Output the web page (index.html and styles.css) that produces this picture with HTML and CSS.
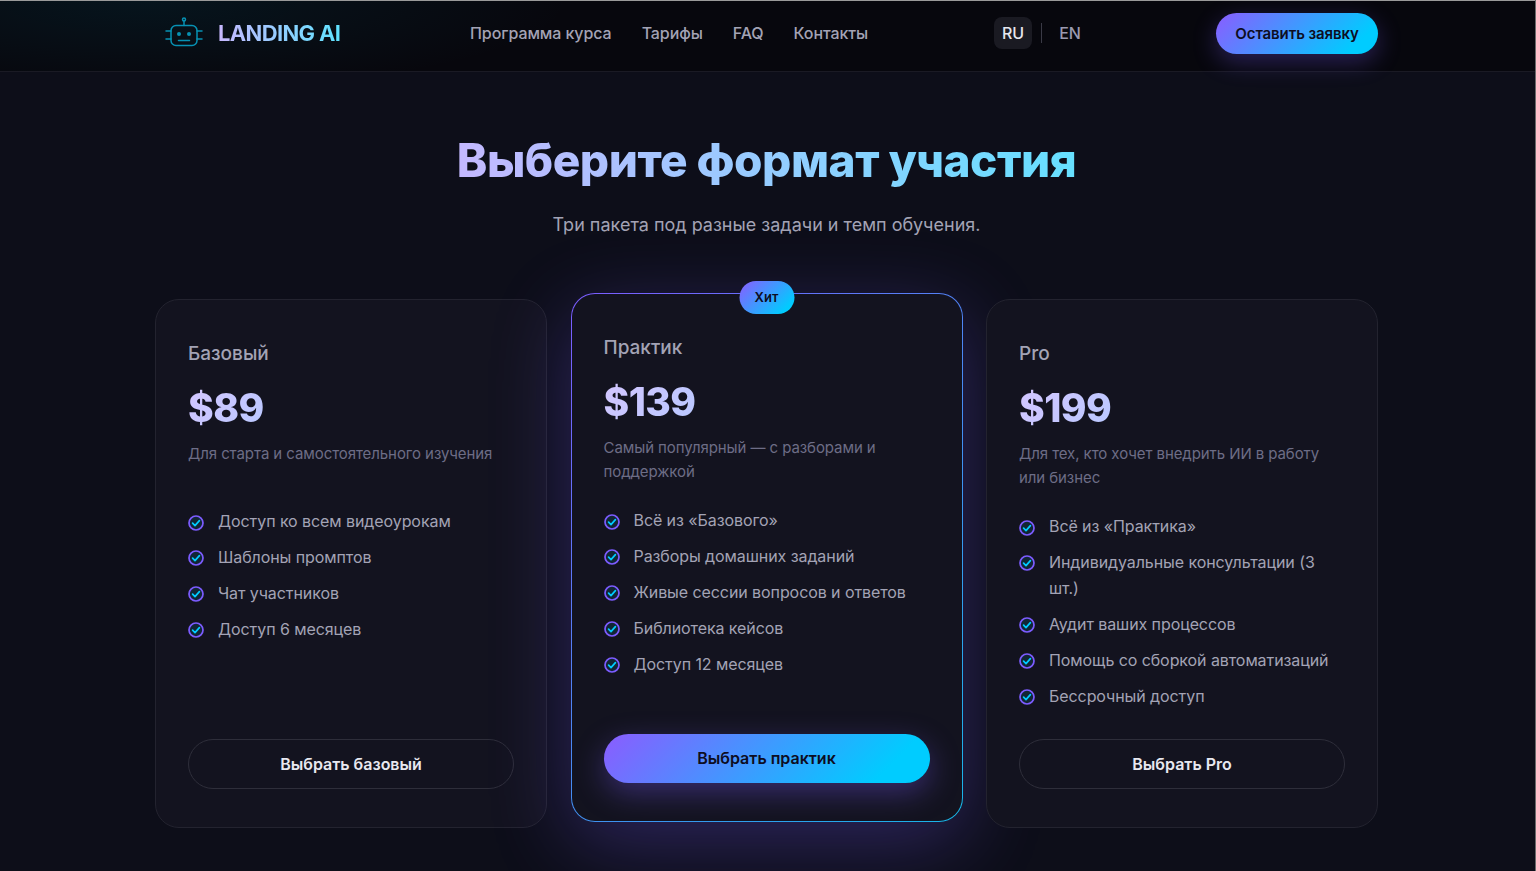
FILE: index.html
```html
<!DOCTYPE html>
<html lang="ru">
<head>
  <meta charset="UTF-8">
  <meta name="viewport" content="width=device-width, initial-scale=1.0">
  <title>Landing AI</title>
  <link rel="stylesheet" href="styles.css">
</head>
<body>

  <!-- Header -->
  <header class="site-header">
    <div class="header-inner">
      <a class="logo" href="#">
        <svg class="logo-icon" viewBox="0 0 38 30" width="38" height="30" fill="none" stroke="#0791b3" stroke-width="1.5" stroke-linecap="round">
          <circle cx="19" cy="2.5" r="1.5"/>
          <path d="M19 4v4.5"/>
          <rect x="6" y="8.5" width="26" height="20" rx="5"/>
          <path d="M1 14h5M1 22h5M32 14h5M32 22h5"/>
          <path d="M13.5 23.5h11"/>
          <circle cx="14" cy="17" r="2" fill="#0791b3" stroke="none"/>
          <circle cx="24" cy="17" r="2" fill="#0791b3" stroke="none"/>
        </svg>
        <span class="logo-text">LANDING AI</span>
      </a>
      <nav class="main-nav">
        <a href="#">Программа курса</a>
        <a href="#">Тарифы</a>
        <a href="#">FAQ</a>
        <a href="#">Контакты</a>
      </nav>
      <div class="lang-switch">
        <span class="lang lang-active">RU</span>
        <span class="lang-sep"></span>
        <span class="lang">EN</span>
      </div>
      <a class="header-cta" href="#">Оставить заявку</a>
    </div>
  </header>

  <!-- Pricing -->
  <main class="pricing">
    <h1 class="pricing-title">Выберите формат участия</h1>
    <p class="pricing-sub">Три пакета под разные задачи и темп обучения.</p>

    <div class="plans">
      <!-- Card 1 -->
      <div class="plan">
        <h3 class="plan-name">Базовый</h3>
        <div class="plan-price">$89</div>
        <p class="plan-desc">Для старта и самостоятельного изучения</p>
        <ul class="plan-list">
          <li><svg class="check" viewBox="0 0 16 16"><circle cx="8" cy="8" r="7" /><path d="M4.6 8.2l2.4 2.4 4.4-5"/></svg>Доступ ко всем видеоурокам</li>
          <li><svg class="check" viewBox="0 0 16 16"><circle cx="8" cy="8" r="7" /><path d="M4.6 8.2l2.4 2.4 4.4-5"/></svg>Шаблоны промптов</li>
          <li><svg class="check" viewBox="0 0 16 16"><circle cx="8" cy="8" r="7" /><path d="M4.6 8.2l2.4 2.4 4.4-5"/></svg>Чат участников</li>
          <li><svg class="check" viewBox="0 0 16 16"><circle cx="8" cy="8" r="7" /><path d="M4.6 8.2l2.4 2.4 4.4-5"/></svg>Доступ 6 месяцев</li>
        </ul>
        <a class="plan-btn" href="#">Выбрать базовый</a>
      </div>

      <!-- Card 2 -->
      <div class="plan plan-featured">
        <span class="plan-badge">Хит</span>
        <h3 class="plan-name">Практик</h3>
        <div class="plan-price">$139</div>
        <p class="plan-desc">Самый популярный — с разборами и поддержкой</p>
        <ul class="plan-list">
          <li><svg class="check" viewBox="0 0 16 16"><circle cx="8" cy="8" r="7" /><path d="M4.6 8.2l2.4 2.4 4.4-5"/></svg>Всё из «Базового»</li>
          <li><svg class="check" viewBox="0 0 16 16"><circle cx="8" cy="8" r="7" /><path d="M4.6 8.2l2.4 2.4 4.4-5"/></svg>Разборы домашних заданий</li>
          <li><svg class="check" viewBox="0 0 16 16"><circle cx="8" cy="8" r="7" /><path d="M4.6 8.2l2.4 2.4 4.4-5"/></svg>Живые сессии вопросов и ответов</li>
          <li><svg class="check" viewBox="0 0 16 16"><circle cx="8" cy="8" r="7" /><path d="M4.6 8.2l2.4 2.4 4.4-5"/></svg>Библиотека кейсов</li>
          <li><svg class="check" viewBox="0 0 16 16"><circle cx="8" cy="8" r="7" /><path d="M4.6 8.2l2.4 2.4 4.4-5"/></svg>Доступ 12 месяцев</li>
        </ul>
        <a class="plan-btn plan-btn-primary" href="#">Выбрать практик</a>
      </div>

      <!-- Card 3 -->
      <div class="plan">
        <h3 class="plan-name">Pro</h3>
        <div class="plan-price">$199</div>
        <p class="plan-desc">Для тех, кто хочет внедрить ИИ в работу или бизнес</p>
        <ul class="plan-list">
          <li><svg class="check" viewBox="0 0 16 16"><circle cx="8" cy="8" r="7" /><path d="M4.6 8.2l2.4 2.4 4.4-5"/></svg>Всё из «Практика»</li>
          <li><svg class="check" viewBox="0 0 16 16"><circle cx="8" cy="8" r="7" /><path d="M4.6 8.2l2.4 2.4 4.4-5"/></svg>Индивидуальные консультации (3 шт.)</li>
          <li><svg class="check" viewBox="0 0 16 16"><circle cx="8" cy="8" r="7" /><path d="M4.6 8.2l2.4 2.4 4.4-5"/></svg>Аудит ваших процессов</li>
          <li><svg class="check" viewBox="0 0 16 16"><circle cx="8" cy="8" r="7" /><path d="M4.6 8.2l2.4 2.4 4.4-5"/></svg>Помощь со сборкой автоматизаций</li>
          <li><svg class="check" viewBox="0 0 16 16"><circle cx="8" cy="8" r="7" /><path d="M4.6 8.2l2.4 2.4 4.4-5"/></svg>Бессрочный доступ</li>
        </ul>
        <a class="plan-btn" href="#">Выбрать Pro</a>
      </div>
    </div>
  </main>

</body>
</html>
```

FILE: styles.css
```css
* {
  box-sizing: border-box;
}

body {
  font-family: Inter, "Noto Sans", sans-serif;
  background-color: #0d0e19;
  color: #a3a3b5;
  height: 871px;
  margin: 0;
  overflow: hidden;
  border-right: 1px solid #6a6a6a;
}

a {
  text-decoration: none;
  color: inherit;
}

/* Header */
.site-header {
  height: 72px;
  border-top: 1px solid #9a9a9a;
  border-bottom: 1px solid #1a1a24;
  background:
    radial-gradient(ellipse 420px 90px at 150px 0, rgba(0, 130, 160, 0.11), transparent),
    #07070d;
}

.header-inner {
  width: 1223px;
  height: 64px;
  margin-left: 155px;
  display: flex;
  align-items: center;
}

.logo {
  display: flex;
  align-items: center;
  gap: 15px;
  margin-left: 10px;
  width: 305px;
}

.logo-icon {
  flex: none;
  margin-top: -3px;
}

.logo-text {
  font-size: 22px;
  font-weight: 700;
  letter-spacing: -0.65px;
  background: linear-gradient(90deg, #c8b8ff, #5fe3ff);
  -webkit-background-clip: text;
  background-clip: text;
  color: transparent;
}

.main-nav {
  display: flex;
  gap: 30px;
  font-size: 16px;
  font-weight: 500;
  letter-spacing: -0.08px;
  color: #a3a3b5;
  width: 524px;
}

.lang-switch {
  display: flex;
  align-items: center;
  font-size: 16px;
  font-weight: 500;
  width: 222px;
}

.lang {
  padding: 0 8px;
  height: 32px;
  line-height: 32px;
  border-radius: 8px;
  color: #9a9ab0;
}

.lang-active {
  background-color: #1a1a22;
  color: #e6e6ee;
}

.lang-sep {
  width: 1px;
  height: 20px;
  margin: 0 9px 0 9px;
  background-color: #3a3a46;
}

.header-cta {
  width: 162px;
  height: 41px;
  line-height: 41px;
  margin-top: 1px;
  text-align: center;
  font-size: 15px;
  font-weight: 600;
  letter-spacing: -0.1px;
  color: #0d0d22;
  border-radius: 21px;
  background: linear-gradient(135deg, #8b5cff, #00ccff 85%);
  box-shadow: 0 8px 24px rgba(124, 92, 255, 0.3);
}

/* Pricing */
.pricing {
  width: 1223px;
  margin-left: 155px;
  padding-top: 58px;
}

.pricing-title {
  width: fit-content;
  margin: 0 auto;
  white-space: nowrap;
  font-size: 46px;
  line-height: 60px;
  font-weight: 800;
  letter-spacing: -0.5px;
  background: linear-gradient(90deg, #c4b8ff 0%, #66e0ff 100%);
  -webkit-background-clip: text;
  background-clip: text;
  color: transparent;
}

.pricing-sub {
  margin: 22px 0 0;
  text-align: center;
  font-size: 18px;
  line-height: 26px;
  color: #a3a3b5;
}

.plans {
  display: grid;
  grid-template-columns: repeat(3, 392px);
  gap: 23.5px;
  margin-top: 61px;
}

.plan {
  position: relative;
  height: 529px;
  padding: 41px 32px 38px;
  display: flex;
  flex-direction: column;
  background-color: #13131f;
  border: 1px solid #23232f;
  border-radius: 24px;
}

.plan-featured {
  transform: translateY(-6px);
  background:
    linear-gradient(#13131f, #13131f) padding-box,
    linear-gradient(135deg, #7c5cff, #18b6e8) border-box;
  border: 1px solid transparent;
  box-shadow: 0 20px 80px rgba(124, 92, 255, 0.3);
}

.plan-badge {
  position: absolute;
  top: -13px;
  left: 50%;
  transform: translateX(-50%);
  width: 55px;
  height: 33px;
  line-height: 33px;
  text-align: center;
  font-size: 13px;
  font-weight: 600;
  letter-spacing: 0.1px;
  color: #0d0d22;
  border-radius: 17px;
  background: linear-gradient(135deg, #8b5cff, #00ccff 85%);
}

.plan-name {
  margin: 0;
  font-size: 19px;
  line-height: 26px;
  font-weight: 500;
  color: #a3a3b5;
}

.plan-price {
  margin-top: 16px;
  font-size: 39px;
  line-height: 50px;
  font-weight: 800;
  letter-spacing: -0.6px;
  width: fit-content;
  background: linear-gradient(135deg, #d4c6ff, #b8c8ff);
  -webkit-background-clip: text;
  background-clip: text;
  color: transparent;
}

.plan-desc {
  margin: 9px 0 0;
  min-height: 43px;
  font-size: 15px;
  line-height: 24px;
  letter-spacing: -0.08px;
  color: #6d6d86;
}

.plan-list {
  list-style: none;
  padding: 0;
  display: flex;
  flex-direction: column;
  gap: 10.4px;
  margin: 24px 0 0;
  font-size: 16px;
  line-height: 25.6px;
  letter-spacing: -0.08px;
  color: #a3a3b5;
}

.plan-list li {
  display: flex;
  align-items: flex-start;
  gap: 14px;
}

.check {
  flex: none;
  width: 16px;
  height: 16px;
  margin-top: 5.5px;
  fill: none;
  stroke-width: 1.7;
  stroke-linecap: round;
  stroke-linejoin: round;
}

.check circle {
  stroke: #7c5cff;
  fill: rgba(0, 204, 255, 0.1);
}

.check path {
  stroke: #00ccff;
}

.plan-btn {
  display: block;
  margin-top: auto;
  height: 50px;
  line-height: 48px;
  text-align: center;
  font-size: 16px;
  font-weight: 600;
  color: #e8e8f0;
  border: 1px solid #2e2e3a;
  border-radius: 25px;
}

.plan-btn-primary {
  height: 49px;
  line-height: 49px;
  border: none;
  color: #0d0d22;
  background: linear-gradient(135deg, #8b5cff, #00ccff 85%);
  box-shadow: 0 10px 30px rgba(124, 92, 255, 0.35);
}
```
